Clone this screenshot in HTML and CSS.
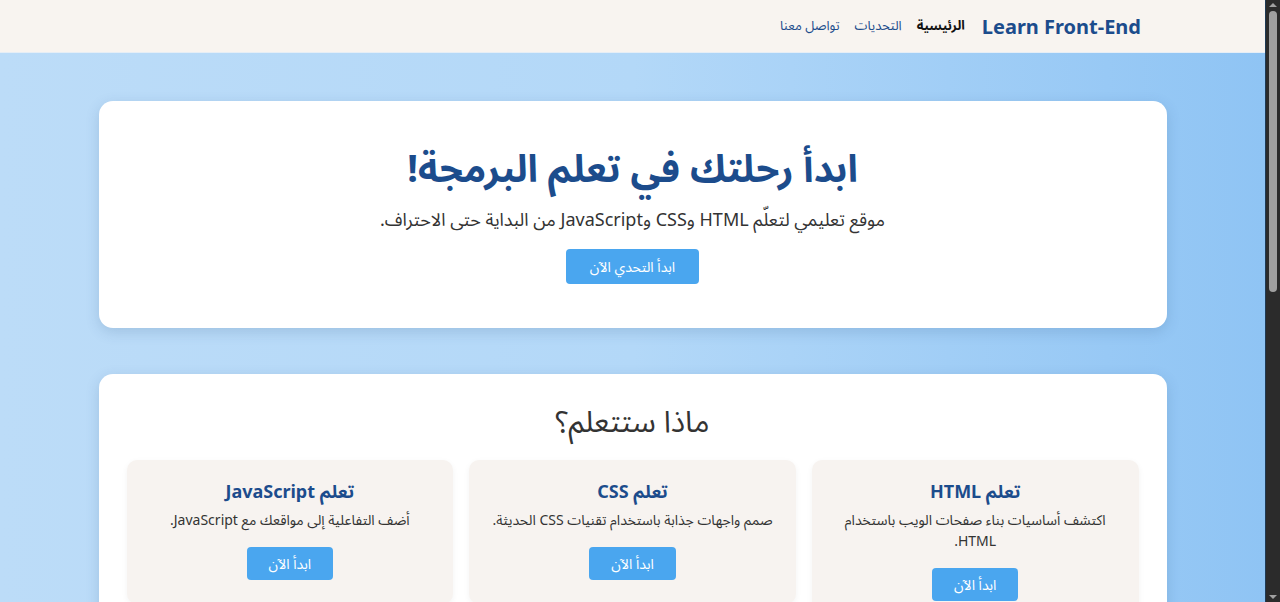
FILE: index.html
```html
<!DOCTYPE html>
<html lang="ar" dir="rtl">
<head>
<meta charset="utf-8">
<title>Learn Front-End</title>
<link rel="stylesheet" href="styles.css">
</head>
<body>
<header class="site-header">
  <div class="logo">Learn Front-End</div>
  <nav class="nav">
    <a class="nav-link active" href="#">الرئيسية</a>
    <a class="nav-link" href="#">التحديات</a>
    <a class="nav-link" href="#">تواصل معنا</a>
  </nav>
</header>
<main class="main">
  <section class="panel hero">
    <h1 class="hero-title">ابدأ رحلتك في تعلم البرمجة!</h1>
    <p class="hero-text">موقع تعليمي لتعلّم HTML وCSS وJavaScript من البداية حتى الاحتراف.</p>
    <a class="btn" href="#">ابدأ التحدي الآن</a>
  </section>
  <section class="panel learn">
    <h2 class="section-title">ماذا ستتعلم؟</h2>
    <div class="cards">
      <div class="card">
        <h3 class="card-title">تعلم HTML</h3>
        <p class="card-text">اكتشف أساسيات بناء صفحات الويب باستخدام HTML.</p>
        <a class="btn btn-sm" href="#">ابدأ الآن</a>
      </div>
      <div class="card">
        <h3 class="card-title">تعلم CSS</h3>
        <p class="card-text">صمم واجهات جذابة باستخدام تقنيات CSS الحديثة.</p>
        <a class="btn btn-sm" href="#">ابدأ الآن</a>
      </div>
      <div class="card">
        <h3 class="card-title">تعلم JavaScript</h3>
        <p class="card-text">أضف التفاعلية إلى مواقعك مع JavaScript.</p>
        <a class="btn btn-sm" href="#">ابدأ الآن</a>
      </div>
    </div>
  </section>
  <section class="panel extra">
    <h2 class="section-title">تحديات برمجية</h2>
    <p class="hero-text">اختبر مهاراتك من خلال تحديات عملية.</p>
  </section>
</main>
<footer class="footer">© 2024 Learn Front-End</footer>
<div class="fake-scrollbar" aria-hidden="true">
  <span class="sb-arrow sb-up"></span>
  <span class="sb-thumb"></span>
  <span class="sb-arrow sb-down"></span>
</div>
</body>
</html>
```
FILE: styles.css
```css
html {
  background: #f8f4f0;
}
body {
  margin: 0 15px 0 0;
  font-family: "Noto Sans", "Noto Sans Arabic", "DejaVu Sans", sans-serif;
  color: #333;
  background: linear-gradient(90deg, #bcdcf8 0%, #b3d8f8 50%, #8fc4f4 100%);
  min-height: 1200px;
}
.site-header {
  height: 53px;
  background: #f8f4f0;
  display: flex;
  align-items: center;
  padding: 0 124px;
  gap: 17px;
  border-bottom: 1px solid #e6eef6;
  box-sizing: border-box;
}
.logo {
  font-size: 20px;
  font-weight: 700;
  color: #1c4c8c;
  direction: ltr;
}
.nav {
  display: flex;
  gap: 15px;
}
.nav-link {
  text-decoration: none;
  color: #1c4c8c;
  font-size: 13px;
}
.nav-link.active {
  color: #111;
  font-weight: 700;
}
.main {
  width: 1068px;
  margin: 0 auto;
  padding-top: 48px;
  display: flex;
  flex-direction: column;
  gap: 46px;
}
.panel {
  background: #fff;
  border-radius: 14px;
  box-shadow: 0 4px 14px rgba(40, 80, 130, 0.18);
  text-align: center;
}
.hero {
  padding: 40px 28px 44px;
}
.hero-title {
  margin: 0;
  font-size: 38px;
  font-weight: 700;
  color: #1c4c8c;
  line-height: 52px;
}
.hero-text {
  margin: 13px 0 17px;
  font-size: 18px;
  line-height: 26px;
  color: #333;
}
.btn {
  display: inline-block;
  background: #4aa6ef;
  color: #fff;
  text-decoration: none;
  font-size: 14px;
  line-height: 19px;
  padding: 8px 24px;
  border-radius: 4px;
}
.learn {
  padding: 27px 28px 28px;
}
.section-title {
  margin: 0 0 19px;
  font-size: 30px;
  line-height: 40px;
  font-weight: 400;
  color: #333;
}
.cards {
  display: grid;
  grid-template-columns: repeat(3, 1fr);
  gap: 16px;
  align-items: start;
}
.card {
  background: #f7f3f0;
  border-radius: 10px;
  padding: 17px 20px 24px;
  box-shadow: 0 2px 6px rgba(0, 0, 0, 0.05);
}
.card-title {
  margin: 0;
  font-size: 18px;
  line-height: 28px;
  font-weight: 700;
  color: #1c4c8c;
}
.card-text {
  margin: 4px 0 17px;
  font-size: 14px;
  line-height: 21px;
  color: #333;
}
.btn-sm {
  padding: 7px 22px;
}
.extra {
  padding: 40px 28px;
}
.footer {
  text-align: center;
  padding: 40px 0;
  color: #1c4c8c;
  font-size: 14px;
}
.fake-scrollbar {
  position: fixed;
  top: 0;
  right: 0;
  width: 15px;
  height: 100vh;
  background: #2b2b2b;
  border-left: 1px solid #1e3a55;
  box-sizing: border-box;
}
.sb-thumb {
  position: absolute;
  top: 11px;
  left: 3px;
  width: 8px;
  height: 281px;
  background: #a0a0a0;
  border-radius: 5px;
}
.sb-arrow {
  position: absolute;
  left: 3px;
  width: 0;
  height: 0;
  border-left: 4px solid transparent;
  border-right: 4px solid transparent;
}
.sb-up {
  top: 3px;
  border-bottom: 4px solid #a0a0a0;
}
.sb-down {
  bottom: 3px;
  border-top: 4px solid #a0a0a0;
}
```
